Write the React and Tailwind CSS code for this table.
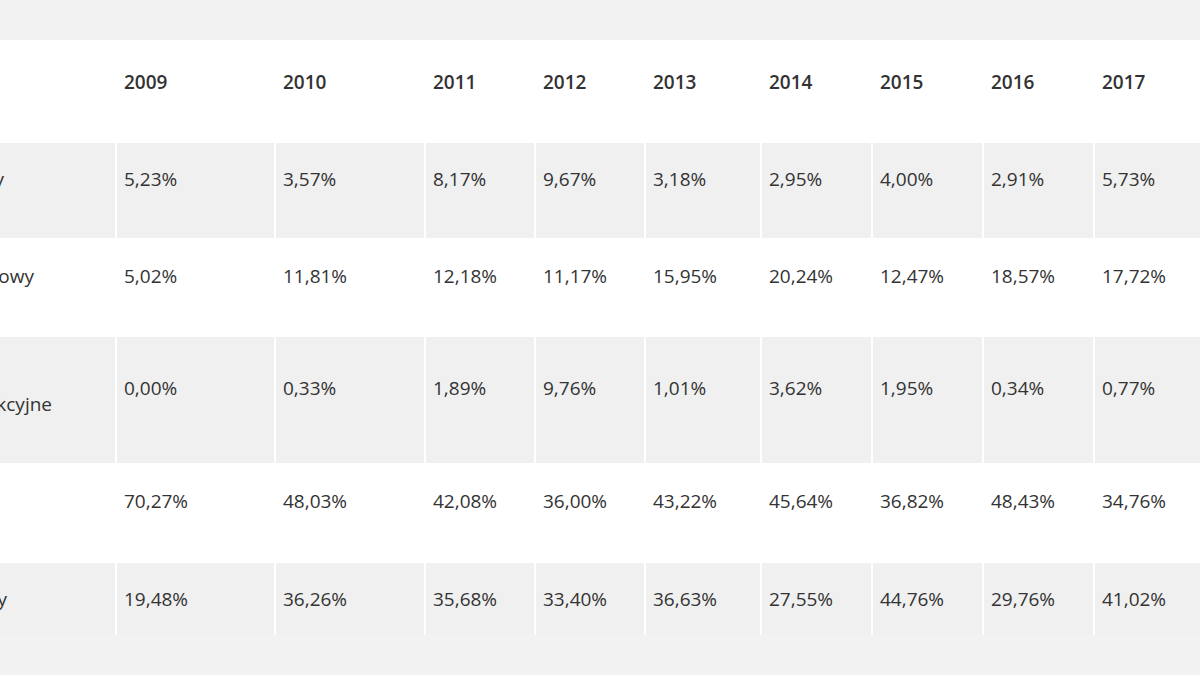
import React from "react";

const years = ["2009", "2010", "2011", "2012", "2013", "2014", "2015", "2016", "2017"];

const rows = [
  {
    label: "Depozyty",
    labelPr: "pr-[111px]",
    labelPt: "pt-[23px]",
    pt: "pt-[23px]",
    h: "h-[95px]",
    gray: true,
    values: ["5,23%", "3,57%", "8,17%", "9,67%", "3,18%", "2,95%", "4,00%", "2,91%", "5,73%"],
  },
  {
    label: "Dług nieskarbowy",
    labelPr: "pr-[81px]",
    labelPt: "pt-[25px]",
    pt: "pt-[25px]",
    h: "h-[99px]",
    gray: false,
    values: ["5,02%", "11,81%", "12,18%", "11,17%", "15,95%", "20,24%", "12,47%", "18,57%", "17,72%"],
  },
  {
    label: "Fundusze akcyjne",
    labelPr: "pr-[63px]",
    labelPt: "pt-[54px]",
    pt: "pt-[38px]",
    h: "h-[126px]",
    gray: true,
    values: ["0,00%", "0,33%", "1,89%", "9,76%", "1,01%", "3,62%", "1,95%", "0,34%", "0,77%"],
  },
  {
    label: "Akcje",
    labelPr: "pr-[140px]",
    labelPt: "pt-[25px]",
    pt: "pt-[25px]",
    h: "h-[100px]",
    gray: false,
    values: ["70,27%", "48,03%", "42,08%", "36,00%", "43,22%", "45,64%", "36,82%", "48,43%", "34,76%"],
  },
  {
    label: "Dług skarbowy",
    labelPr: "pr-[108px]",
    labelPt: "pt-[23px]",
    pt: "pt-[23px]",
    h: "h-[72px]",
    gray: true,
    values: ["19,48%", "36,26%", "35,68%", "33,40%", "36,63%", "27,55%", "44,76%", "29,76%", "41,02%"],
  },
];

const gridCols =
  "grid grid-cols-[115px_157px_148px_108px_108px_114px_109px_109px_109px_1fr] gap-x-[2px]";

export default function App() {
  return (
    <div className="w-[1200px] h-[675px] overflow-hidden bg-[#f2f2f2] pt-10 font-['Open_Sans','Noto_Sans',sans-serif] text-[19px] leading-[27px] text-[#333]">
      <div className="bg-white">
        <div className={`${gridCols} h-[103px]`}>
          <div />
          {years.map((y) => (
            <div key={y} className="pt-[29px] pl-[7px] font-semibold">
              {y}
            </div>
          ))}
        </div>
        {rows.map((r, i) => (
          <div key={i} className={`${gridCols} ${r.h}`}>
            <div
              className={`flex justify-end overflow-hidden whitespace-nowrap ${r.labelPr} ${r.labelPt} ${
                r.gray ? "bg-[#f0f0f0]" : "bg-white"
              }`}
            >
              <span className="shrink-0">{r.label}</span>
            </div>
            {r.values.map((v, j) => (
              <div
                key={j}
                className={`pl-[7px] ${r.pt} ${r.gray ? "bg-[#f0f0f0]" : "bg-white"}`}
              >
                {v}
              </div>
            ))}
          </div>
        ))}
      </div>
    </div>
  );
}
